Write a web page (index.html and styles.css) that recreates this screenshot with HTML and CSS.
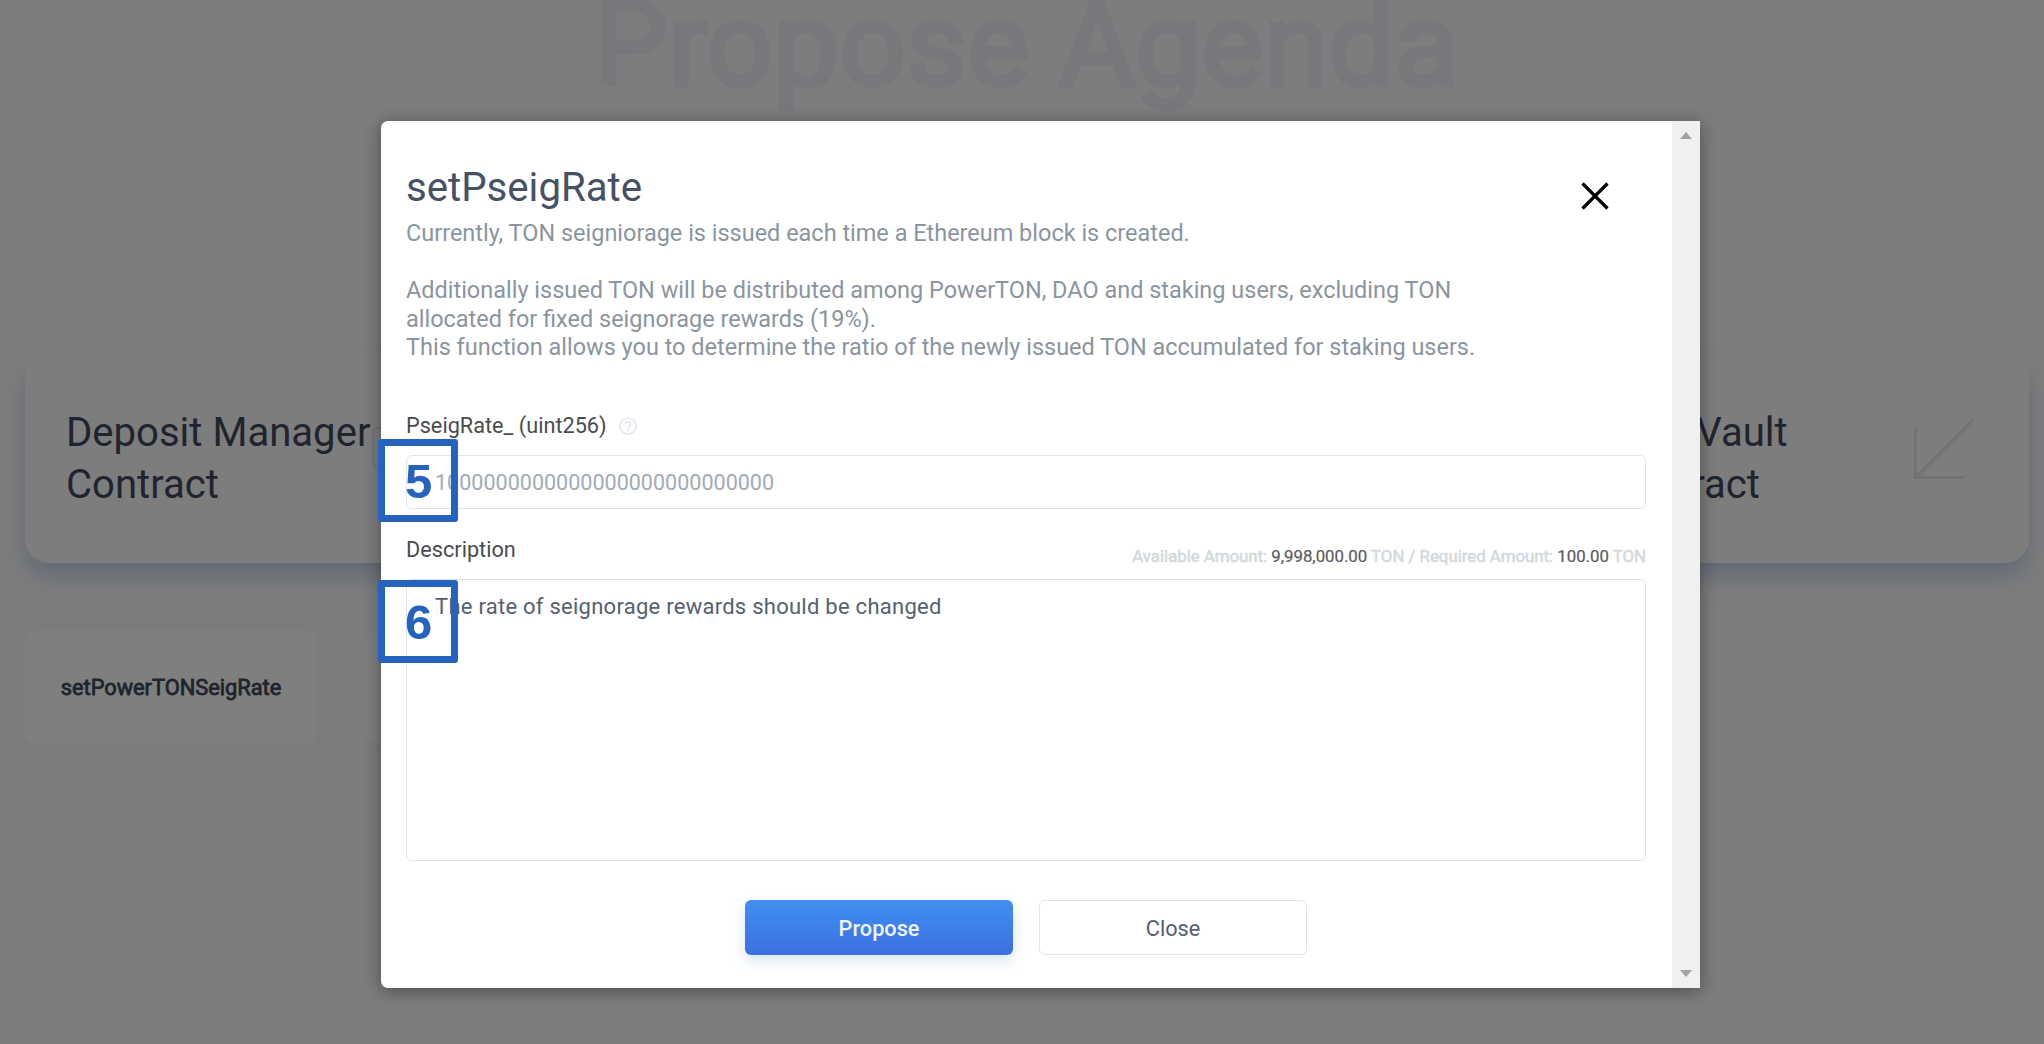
FILE: index.html
```html
<!DOCTYPE html>
<html lang="en">
<head>
<meta charset="utf-8">
<title>Propose Agenda</title>
<link rel="stylesheet" href="styles.css">
</head>
<body>
<main class="page">
  <h1 class="page-title">Propose Agenda</h1>
  <section class="contracts">
    <article class="contract contract-first">
      <h2 class="contract-name">Deposit Manager<br>Contract</h2>
      <span class="contract-toggle"></span>
    </article>
    <article class="contract">
      <h2 class="contract-name">DAO Vault<br>Contract</h2>
      <svg class="contract-arrow" viewBox="0 0 62 62" width="62" height="62"><path d="M2.5 9.500V59.500H52M3 59L60 2"/></svg>
    </article>
  </section>
  <section class="functions">
    <div class="function">setPowerTONSeigRate</div>
    <div class="function"></div>
  </section>
</main>
<div class="overlay">
  <div class="modal" role="dialog">
    <div class="modal-body">
      <header class="modal-head">
        <h3 class="modal-title">setPseigRate</h3>
        <svg class="modal-x" viewBox="0 0 28 28" width="28" height="28"><path d="M1.500 1.500L26.500 26.500M26.500 1.500L1.500 26.500"/></svg>
      </header>
      <p class="modal-text">Currently, TON seigniorage is issued each time a Ethereum block is created.<br><br>Additionally issued TON will be distributed among PowerTON, DAO and staking users, excluding TON<br>allocated for fixed seignorage rewards (19%).<br>This function allows you to determine the ratio of the newly issued TON accumulated for staking users.</p>
      <div class="field-head">
        <label class="field-label">PseigRate_ (uint256)</label>
        <svg class="help" viewBox="0 0 18 18" width="18" height="18"><circle cx="9" cy="9" r="8"/><path d="M6.500 7.200a2.500 2.400 0 1 1 3.600 2.100c-.8.400-1.100.8-1.100 1.700M9 12.500v1.400"/></svg>
      </div>
      <div class="input">1000000000000000000000000000</div>
      <div class="field-head field-head-desc">
        <label class="field-label">Description</label>
        <div class="amounts">Available Amount: <b>9,998,000.00</b> TON / Required Amount: <b>100.00</b> TON</div>
      </div>
      <div class="textarea">The rate of seignorage rewards should be changed</div>
      <div class="actions">
        <button class="btn btn-primary">Propose</button>
        <button class="btn btn-plain">Close</button>
      </div>
    </div>
    <div class="scrollbar">
      <svg viewBox="0 0 12 7" width="12" height="7"><path d="M0 7L6 0L12 7Z"/></svg>
      <svg viewBox="0 0 12 7" width="12" height="7"><path d="M0 0L6 7L12 0Z"/></svg>
    </div>
    <div class="step step-five">5</div>
    <div class="step step-six">6</div>
  </div>
</div>
</body>
</html>
```
FILE: styles.css
```css
* { box-sizing: border-box; }
body { margin: 0; height: 1044px; overflow: hidden; background: #fafafa; font-family: Roboto, sans-serif; color: #3e495c; }
h1, h2, h3, p { margin: 0; }

.page { height: 1044px; }
.page-title { height: 354px; padding-left: 8px; text-align: center; font-size: 117.500px; font-weight: 400; line-height: 91px; color: #eef0f7; -webkit-text-stroke: 4.500px #eef0f7; }
.contracts { display: flex; justify-content: space-between; padding: 0 15px 0 25px; }
.contract { display: flex; justify-content: space-between; width: 464px; height: 209px; padding: 53px 54px 0 42px; border-radius: 24px; background: #fafafa; box-shadow: 0 14px 24px -2px rgba(70, 112, 195, .32); }
.contract-first { justify-content: flex-start; padding: 53px 0 0 41px; }
.contract-name { flex: none; font-size: 40.100px; font-weight: 400; line-height: 52px; }
.contract-toggle { flex: none; width: 42px; height: 41px; margin: 20px 0 0 2px; border: 2px solid #e6e7ee; border-radius: 6px; }
.contract-arrow { margin-top: 11px; fill: none; stroke: #e6e7ee; stroke-width: 3; }
.functions { display: flex; gap: 50px; padding: 67px 25px; }
.function { display: flex; align-items: center; justify-content: center; width: 292px; height: 114px; border-radius: 10px; background: #fff; box-shadow: 0 0 10px rgba(96, 97, 112, .03); font-size: 21.800px; -webkit-text-stroke: .8px #3e495c; }

.overlay { position: absolute; inset: 0; display: flex; padding: 120.500px 0 0 381px; background: rgba(0, 0, 0, .5); }
.modal { position: relative; display: flex; width: 1319px; height: 867px; border-radius: 7px 0 0 7px; background: #fff; box-shadow: 0 3px 18px rgba(0, 0, 0, .4); }
.modal-body { width: 1291px; padding: 43.500px 26px 0 25px; }
.modal-head { display: flex; justify-content: space-between; height: 55px; padding-right: 37px; }
.modal-title { font-size: 40.200px; font-weight: 400; line-height: 47px; color: #475164; }
.modal-x { margin-top: 18px; fill: none; stroke: #000; stroke-width: 3.2; }
.modal-text { font-size: 23.470px; line-height: 28.600px; color: #8b959f; white-space: nowrap; }
.field-head { display: flex; align-items: center; gap: 12px; height: 30px; margin-top: 49px; }
.field-label { font-size: 21.700px; color: #4a4b50; }
.help { fill: none; stroke: #dfe4ee; stroke-width: 1.500; }
.input, .textarea { border: 1.500px solid #dfe4ee; border-radius: 6px; }
.input { height: 54px; margin-top: 14px; padding-left: 28px; font-size: 21.550px; line-height: 53px; color: #a1abb5; }
.field-head-desc { justify-content: space-between; margin-top: 26px; }
.amounts { margin-top: 12px; font-size: 16.800px; color: #d3dade; -webkit-text-stroke: .6px #d3dade; }
.amounts b { font-weight: 400; color: #5a5b60; -webkit-text-stroke: .2px #5a5b60; }
.textarea { height: 282.500px; margin-top: 14px; padding: 12px 28px; font-size: 22px; line-height: 30px; letter-spacing: .26px; color: #566071; }
.actions { display: flex; justify-content: center; gap: 26px; margin-top: 39px; }
.btn { width: 268px; height: 55px; padding: 1px 0 0; border: 0; border-radius: 6px; font: 400 21.700px Roboto, sans-serif; }
.btn-primary { background: linear-gradient(#418ff2, #3b70dc); box-shadow: 0 6px 14px rgba(60, 120, 190, .2); color: #f0f5fe; font-weight: 500; }
.btn-plain { border: 1.500px solid #dfe4ee; background: #fff; color: #566071; }
.scrollbar { display: flex; flex-direction: column; align-items: center; justify-content: space-between; width: 28px; padding: 11px 0; background: #f0f0f0; fill: #a3a3a3; }
.step { position: absolute; left: -3px; width: 80px; height: 83px; border: 7.500px solid #2563be; border-radius: 3px; padding-left: 20px; font: 700 49px/71px "Liberation Sans", sans-serif; color: #2563be; }
.step-five { top: 318px; }
.step-six { top: 459px; }
```
